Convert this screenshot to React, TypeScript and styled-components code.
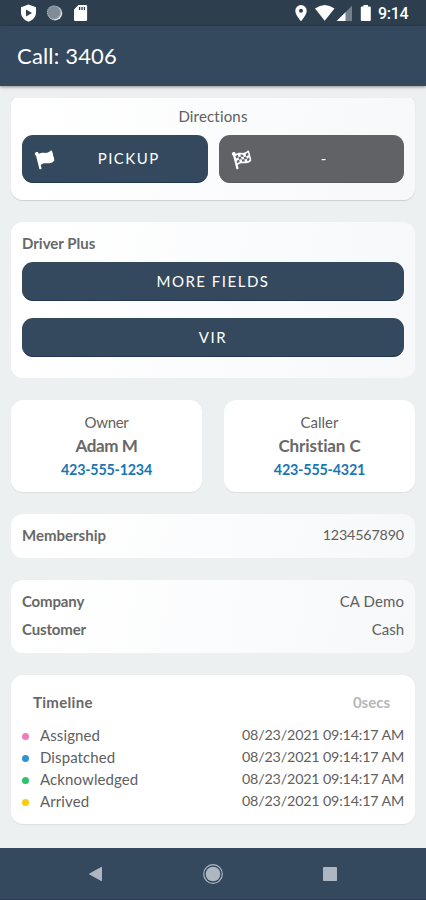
import React from "react";
import styled, { createGlobalStyle } from "styled-components";
import { FaFlag, FaFlagCheckered } from "react-icons/fa";

const GlobalStyle = createGlobalStyle`
  * { box-sizing: border-box; }
  body { margin: 0; background: #ecf0f1; }
`;

const Screen = styled.div`
  width: 426px;
  height: 900px;
  display: flex;
  flex-direction: column;
  overflow: hidden;
  background: #ecf0f1;
  color: #606060;
  font-family: Lato, "Open Sans", sans-serif;
  font-size: 15px;
`;

const StatusBar = styled.div`
  flex: none;
  height: 26px;
  display: flex;
  justify-content: space-between;
  background: #2d3e4f;
`;

const StatusIcons = styled.svg`
  display: block;
  flex: none;
`;

const StatusRight = styled.div`
  display: flex;
  width: 135px;
`;

const Clock = styled.span`
  font: 500 16px/28px Roboto, sans-serif;
  letter-spacing: -0.3px;
  color: #fff;
`;

const Header = styled.header`
  flex: none;
  height: 60px;
  padding-left: 17px;
  background: #35495e;
  box-shadow: 0 1px 3px rgba(0, 0, 0, 0.4);
  color: #fff;
  font-size: 22px;
  line-height: 60px;
  letter-spacing: 0.18px;
`;

const Content = styled.main`
  flex: 1;
  min-height: 0;
  margin-top: 12px;
  padding: 0 11px;
  overflow: hidden;
  display: flex;
  flex-direction: column;
  gap: 22px;
`;

const Card = styled.section<{ $height: number; $plain?: boolean }>`
  flex: none;
  height: ${(p) => p.$height}px;
  padding: 0 11px;
  border-radius: 12px;
  background: ${(p) => (p.$plain ? "#fff" : "linear-gradient(100deg, #fff 8%, #f6f8fa 100%)")};
  box-shadow: ${(p) => (p.$plain ? "0 0.5px 1px rgba(0, 0, 0, 0.07)" : "none")};
`;

const DirectionsCard = styled(Card)`
  margin-top: -4px;
  padding-top: 13px;
  box-shadow: 0 0.5px 1px rgba(0, 0, 0, 0.14);
`;

const DriverCard = styled(Card)`
  padding-top: 11px;
`;

const Text = styled.span<{ $bold?: boolean; $spacing?: number }>`
  font-weight: ${(p) => (p.$bold ? 700 : 400)};
  color: ${(p) => (p.$bold ? "#686868" : "inherit")};
  letter-spacing: ${(p) => p.$spacing ?? 0}px;
  white-space: nowrap;
`;

const DirectionsTitle = styled.div`
  height: 28px;
  line-height: 19px;
  text-align: center;
  letter-spacing: 0.17px;
`;

const ButtonRow = styled.div`
  display: flex;
  gap: 11px;
`;

const Button = styled.button<{ $muted?: boolean; $tall?: boolean }>`
  display: flex;
  align-items: center;
  justify-content: center;
  width: 100%;
  height: ${(p) => (p.$tall ? 48 : 39)}px;
  padding: 0 0 1px;
  border: 0;
  border-bottom: 1px solid ${(p) => (p.$muted ? "#55585c" : "#203550")};
  border-radius: 11px;
  background: ${(p) => (p.$muted ? "#606266" : "#35495e")};
  color: #fff;
  font: 400 15px/20px Lato, sans-serif;
  letter-spacing: 1.5px;
`;

const FlagSlot = styled.span`
  flex: none;
  width: 46px;
  height: 18px;
  padding-left: 14px;
  svg {
    display: block;
    margin-top: 1px;
    transform: rotate(-14deg);
  }
`;

const ButtonLabel = styled.span<{ $shift?: number }>`
  flex: 1;
  text-align: center;
  padding-right: ${(p) => p.$shift ?? 0}px;
`;

const SectionTitle = styled.div`
  height: 29px;
  line-height: 20px;
  font-weight: 700;
  color: #686868;
`;

const Stack = styled.div`
  display: flex;
  flex-direction: column;
  gap: 17px;
`;

const People = styled.div`
  flex: none;
  display: grid;
  grid-template-columns: 1fr 1fr;
  gap: 22px;
`;

const Person = styled(Card)`
  padding-top: 11px;
  display: flex;
  flex-direction: column;
  align-items: center;
`;

const PersonName = styled(Text)`
  font-size: 17px;
  line-height: 24px;
`;

const PersonRole = styled(Text)`
  line-height: 23px;
`;

const Phone = styled(Text)`
  font-size: 14.3px;
  line-height: 23px;
  color: #1976b4;
`;

const InfoCard = styled(Card)`
  padding-top: 7px;
`;

const InfoRow = styled.div`
  display: flex;
  justify-content: space-between;
  height: 28px;
  line-height: 28px;
`;

const MemberNumber = styled(Text)`
  font-size: 14.3px;
`;

const TimelineHead = styled.div`
  display: flex;
  justify-content: space-between;
  height: 49px;
  padding: 0 14px 0 11px;
  line-height: 54px;
`;

const Duration = styled(Text)`
  color: #b5b7b9;
`;

const TimelineRow = styled.div`
  display: flex;
  align-items: center;
  height: 22px;
  line-height: 22px;
`;

const Dot = styled.span<{ $color: string }>`
  flex: none;
  width: 7px;
  height: 7px;
  margin: 3px 11px 0 0;
  border-radius: 50%;
  background: ${(p) => p.$color};
`;

const Stamp = styled(Text)`
  margin-left: auto;
  font-size: 14.3px;
`;

const NavBar = styled.nav`
  flex: none;
  height: 52px;
  background: #35495e;
  border-bottom: 1px solid #293b53;
  svg {
    display: block;
  }
`;

const people = [
  { role: "Owner", roleSpacing: -0.3, name: "Adam M", nameSpacing: -0.4, phone: "423-555-1234", phoneSpacing: -0.22 },
  { role: "Caller", roleSpacing: 0, name: "Christian C", nameSpacing: -0.1, phone: "423-555-4321", phoneSpacing: -0.18 },
];

const events = [
  { label: "Assigned", color: "#ef7cc0" },
  { label: "Dispatched", color: "#3192d3" },
  { label: "Acknowledged", color: "#2cc36b" },
  { label: "Arrived", color: "#fccb0a" },
];

export default function App() {
  return (
    <>
      <GlobalStyle />
      <Screen>
        <StatusBar>
          <StatusIcons width="100" height="26" viewBox="0 0 100 26">
            <path d="M28.5 4.5 36 7.3v5.2c0 4.2-3 7.6-7.5 9.3C24 20.1 21 16.700 21 12.500V7.300Z" fill="#fff" />
            <path d="M26 9.500v7l6-3.500Z" fill="#2d3e4f" />
            <circle cx="55" cy="13.200" r="7.200" fill="#dfe4e8" />
            <circle cx="53.900" cy="12.400" r="7" fill="#7f8c98" />
            <circle cx="53.900" cy="12.400" r="6.400" fill="none" stroke="#a4adb6" strokeWidth="1.100" strokeDasharray="1 1" />
            <path d="M78.500 5h7.300a1.300 1.300 0 0 1 1.300 1.300v13.400a1.300 1.300 0 0 1-1.300 1.300H75.300a1.300 1.300 0 0 1-1.300-1.300V9.500Z" fill="#fff" />
            <path d="M79.600 7v3M82 7v3M84.400 7v3" stroke="#2d3e4f" strokeWidth="1.300" />
          </StatusIcons>
          <StatusRight>
            <StatusIcons width="87" height="26" viewBox="291 0 87 26">
              <path d="M301 5a5.700 5.700 0 0 0-5.700 5.700c0 4.200 5.700 10.500 5.700 10.500s5.700-6.300 5.700-10.500A5.700 5.700 0 0 0 301 5Z" fill="#fff" />
              <circle cx="301" cy="10.700" r="2" fill="#2d3e4f" />
              <path d="M315 8.600Q324.700 1.500 334.500 8.600L324.700 20.800Z" fill="#fff" />
              <path d="M352 5.700V21h-15.300Z" fill="#74808b" />
              <path d="M345.500 12.200V21h-8.800Z" fill="#fff" />
              <path d="M363.500 5h4.500v1.500h1.800a1 1 0 0 1 1 1V20a1 1 0 0 1-1 1h-8a1 1 0 0 1-1-1V7.500a1 1 0 0 1 1-1h1.700Z" fill="#fff" />
            </StatusIcons>
            <Clock>9:14</Clock>
          </StatusRight>
        </StatusBar>
        <Header>Call: 3406</Header>

        <Content>
          <DirectionsCard $height={106}>
            <DirectionsTitle>Directions</DirectionsTitle>
            <ButtonRow>
              <Button $tall>
                <FlagSlot><FaFlag size={18} /></FlagSlot>
                <ButtonLabel $shift={18}>PICKUP</ButtonLabel>
              </Button>
              <Button $tall $muted>
                <FlagSlot><FaFlagCheckered size={18} /></FlagSlot>
                <ButtonLabel $shift={20}>-</ButtonLabel>
              </Button>
            </ButtonRow>
          </DirectionsCard>

          <DriverCard $height={156}>
            <SectionTitle>Driver Plus</SectionTitle>
            <Stack>
              <Button>MORE FIELDS</Button>
              <Button>VIR</Button>
            </Stack>
          </DriverCard>

          <People>
            {people.map((p) => (
              <Person key={p.role} $height={92} $plain>
                <PersonRole $spacing={p.roleSpacing}>{p.role}</PersonRole>
                <PersonName $bold $spacing={p.nameSpacing}>{p.name}</PersonName>
                <Phone $bold $spacing={p.phoneSpacing}>{p.phone}</Phone>
              </Person>
            ))}
          </People>

          <InfoCard $height={44}>
            <InfoRow>
              <Text $bold>Membership</Text>
              <MemberNumber $spacing={-0.16}>1234567890</MemberNumber>
            </InfoRow>
          </InfoCard>

          <InfoCard $height={72.5}>
            <InfoRow>
              <Text $bold $spacing={-0.15}>Company</Text>
              <Text $spacing={0.1}>CA Demo</Text>
            </InfoRow>
            <InfoRow>
              <Text $bold $spacing={-0.15}>Customer</Text>
              <Text>Cash</Text>
            </InfoRow>
          </InfoCard>

          <Card $height={149.5} $plain>
            <TimelineHead>
              <Text $bold $spacing={0.3}>Timeline</Text>
              <Duration $bold>0secs</Duration>
            </TimelineHead>
            {events.map((e) => (
              <TimelineRow key={e.label}>
                <Dot $color={e.color} />
                <Text $spacing={0.1}>{e.label}</Text>
                <Stamp $spacing={-0.18}>08/23/2021 09:14:17 AM</Stamp>
              </TimelineRow>
            ))}
          </Card>
        </Content>

        <NavBar>
          <svg width="426" height="51" viewBox="0 848 426 51">
            <path d="M89.500 874 101.500 867.300V880.700Z" fill="#aeb7c1" stroke="#aeb7c1" strokeLinejoin="round" />
            <circle cx="213" cy="874" r="9.300" fill="none" stroke="#aeb7c1" strokeWidth="1.200" />
            <circle cx="213" cy="874" r="7.300" fill="#aeb7c1" />
            <rect x="323" y="867" width="14" height="14" rx="0.800" fill="#aeb7c1" />
          </svg>
        </NavBar>
      </Screen>
    </>
  );
}
